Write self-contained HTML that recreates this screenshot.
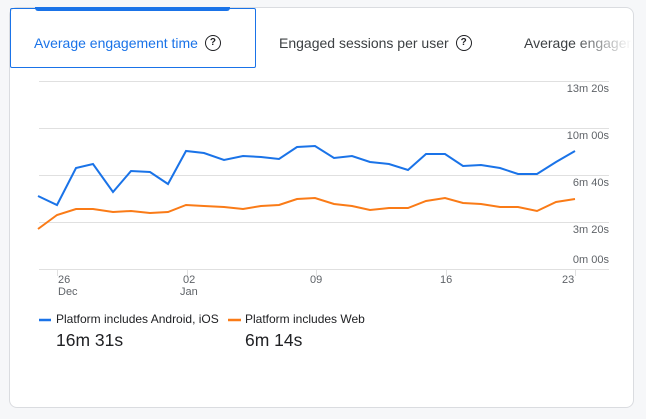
<!DOCTYPE html><html><head><style>
body{margin:0;width:646px;height:419px;background:#f6f7f9;font-family:"Liberation Sans",Arial,sans-serif;position:relative;overflow:hidden}
.card{position:absolute;left:9px;top:7px;width:625px;height:401px;background:#fff;border:1px solid #dadce0;border-radius:8px;box-sizing:border-box}
.tab{position:absolute;left:10px;top:8px;width:246px;height:60px;border:1.5px solid #1a73e8;box-sizing:border-box;border-radius:2px}
.bar{position:absolute;left:35px;top:7px;width:195px;height:4px;background:#1a73e8;border-radius:0 0 3px 3px}
.t{position:absolute;top:34px;font-size:14px;color:#3c4043;white-space:nowrap;display:flex;align-items:center;height:17px}
.q{display:inline-block;width:14px;height:14px;border:1.8px solid #202124;border-radius:50%;font-size:10px;font-weight:bold;text-align:center;line-height:14px;color:#202124;margin-left:7px}
.lbl{position:absolute;font-size:11px;color:#5f6368;white-space:nowrap}
.lg{position:absolute;font-size:12px;color:#202124;white-space:nowrap}
</style></head><body>
<div class="card"></div>
<div class="tab"></div><div class="bar"></div>
<div class="t" style="left:34px;color:#1a73e8">Average engagement time<span class="q">?</span></div>
<div class="t" style="left:279px">Engaged sessions per user<span class="q">?</span></div>
<div class="t" style="left:524px;width:108px;overflow:hidden;-webkit-mask-image:linear-gradient(90deg,#000 45%,transparent);">Average engagement</div>
<svg style="position:absolute;left:0;top:0" width="646" height="419">
<g stroke="#e0e0e0" stroke-width="1">
<line x1="39" y1="81.5" x2="609" y2="81.5"/><line x1="39" y1="128.5" x2="609" y2="128.5"/><line x1="39" y1="175.5" x2="609" y2="175.5"/><line x1="39" y1="222.5" x2="609" y2="222.5"/><line x1="39" y1="269.5" x2="609" y2="269.5"/>
<line x1="57.5" y1="269" x2="57.5" y2="276"/><line x1="187.5" y1="269" x2="187.5" y2="276"/><line x1="316.5" y1="269" x2="316.5" y2="276"/><line x1="446.5" y1="269" x2="446.5" y2="276"/><line x1="575.5" y1="269" x2="575.5" y2="276"/>
</g>
<polyline fill="none" stroke="#1a73e8" stroke-width="2" points="38,196 57,205 76,168 93,164 113,192 131,171 150,172 168,184 186,151 204,153 224,160 243,156 261,157 279,159 297,147 315,146 334,158 352,156 370,162 389,164 408,170 426,154 445,154 463,166 481,165 500,168 518,174 537,174 556,162 575,151"/>
<polyline fill="none" stroke="#fa7b17" stroke-width="2" points="38,229 57,215 76,209 93,209 113,212 131,211 150,213 168,212 186,205 204,206 224,207 243,209 261,206 279,205 297,199 315,198 334,204 352,206 370,210 389,208 408,208 426,201 445,198 463,203 481,204 500,207 518,207 537,211 556,202 575,199"/>
<line x1="39" y1="320" x2="51" y2="320" stroke="#1a73e8" stroke-width="2.5"/>
<line x1="228" y1="320" x2="241" y2="320" stroke="#fa7b17" stroke-width="2.5"/>
</svg>
<div class="lbl" style="right:37px;top:83px">13m 20s</div>
<div class="lbl" style="right:37px;top:130px">10m 00s</div>
<div class="lbl" style="right:37px;top:177px">6m 40s</div>
<div class="lbl" style="right:37px;top:224px">3m 20s</div>
<div class="lbl" style="right:37px;top:254px">0m 00s</div>
<div class="lbl" style="left:58px;top:274px;line-height:12px">26<br>Dec</div>
<div class="lbl" style="left:180px;top:274px;line-height:12px">&nbsp;02<br>Jan</div>
<div class="lbl" style="left:310px;top:274px">09</div>
<div class="lbl" style="left:440px;top:274px">16</div>
<div class="lbl" style="left:562px;top:274px">23</div>
<div class="lg" style="left:56px;top:312px">Platform includes Android, iOS</div>
<div class="lg" style="left:245px;top:312px">Platform includes Web</div>
<div style="position:absolute;left:56px;top:330px;font-size:17.5px;color:#202124">16m 31s</div>
<div style="position:absolute;left:245px;top:330px;font-size:17.5px;color:#202124">6m 14s</div>
</body></html>
